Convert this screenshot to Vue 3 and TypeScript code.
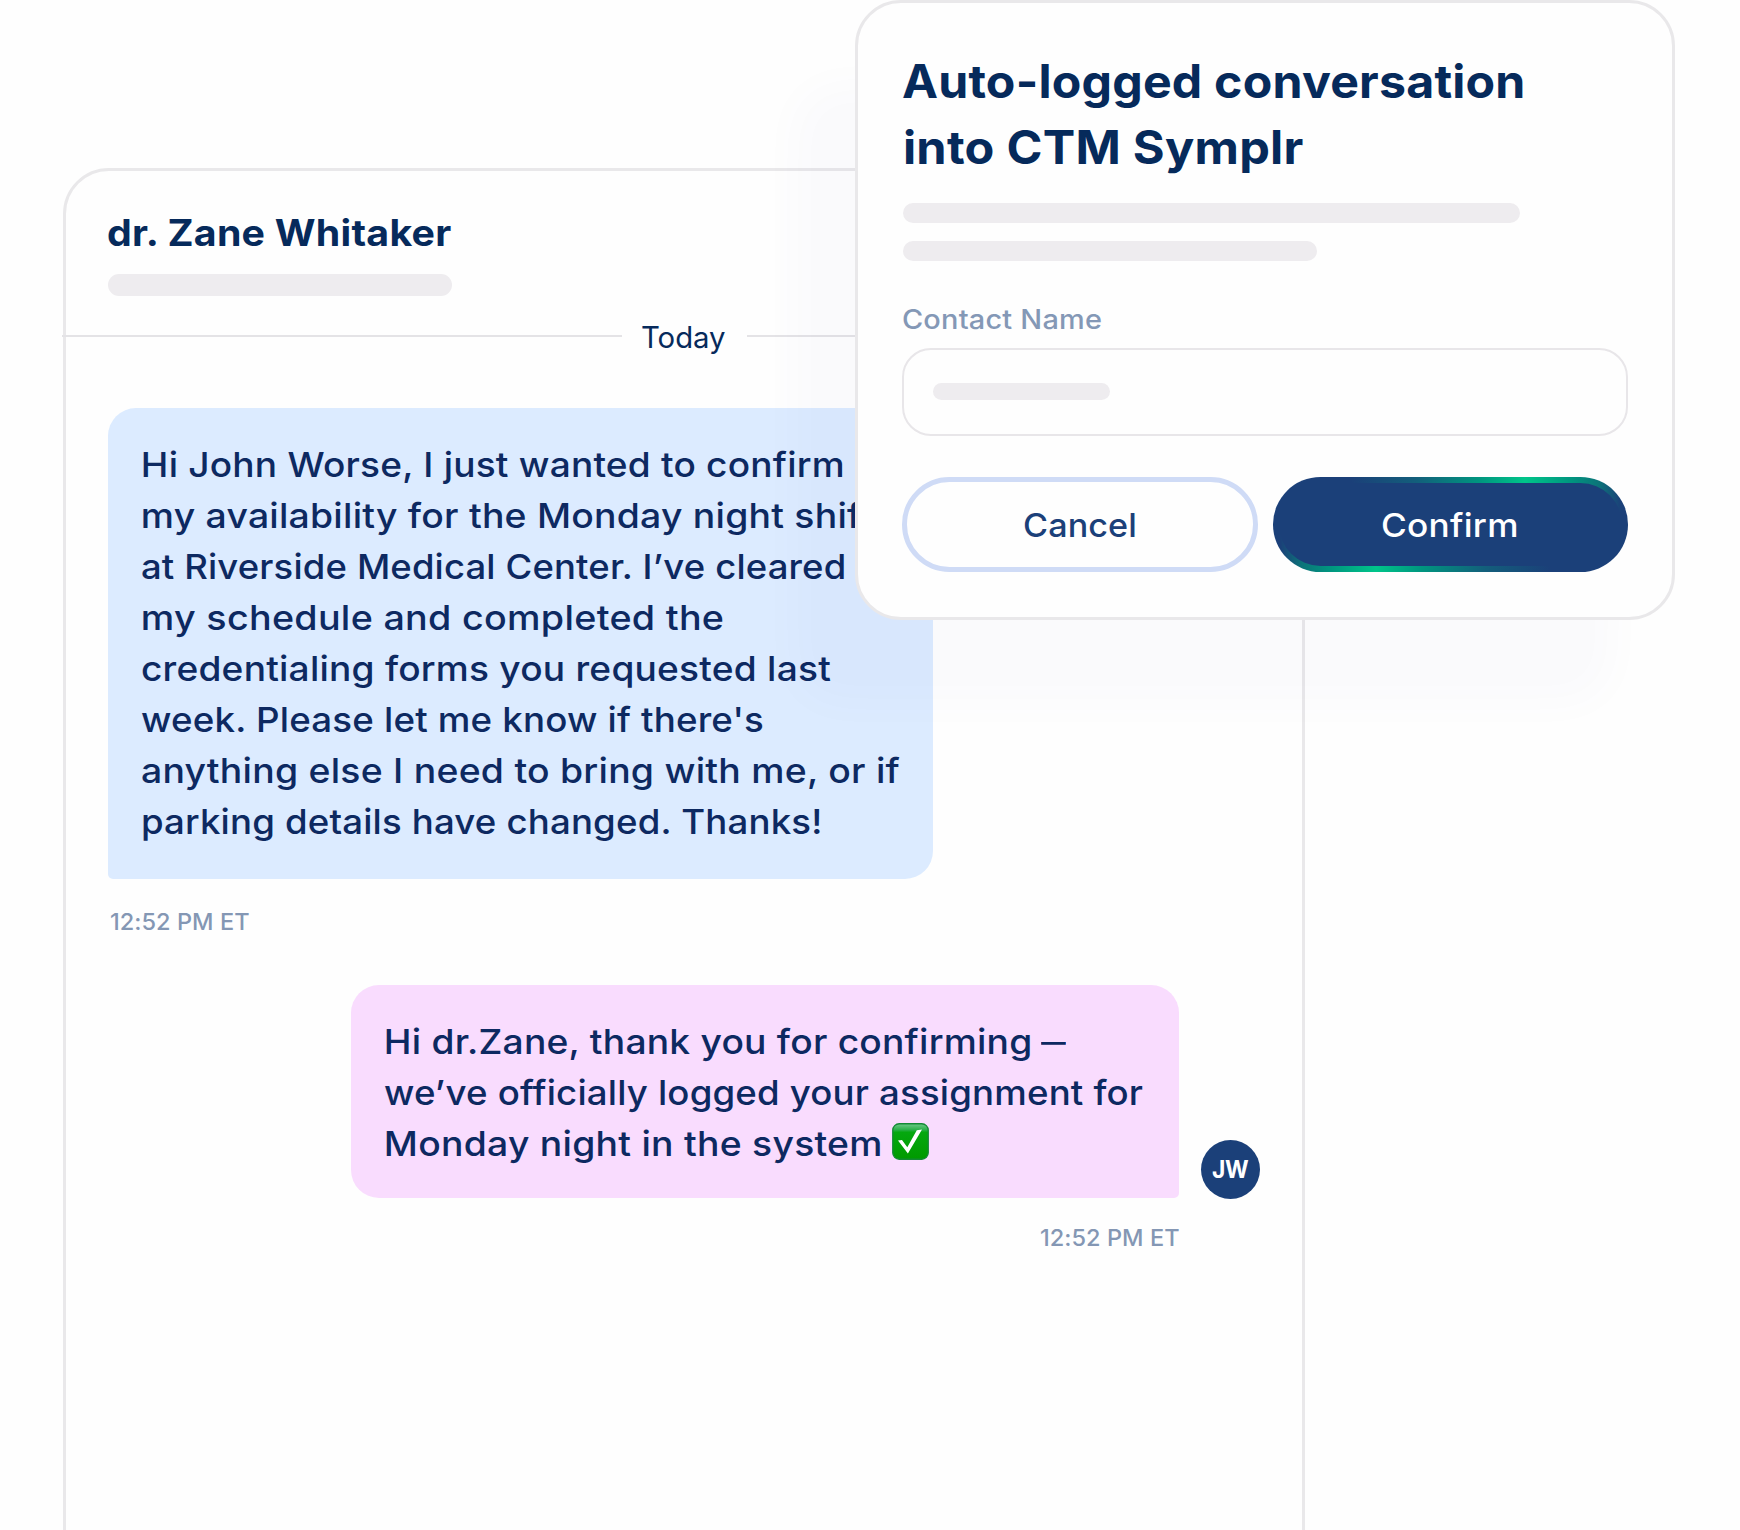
<script setup lang="ts">
interface Line {
  text: string
  indent: number
  width: number
  tail?: 'dash' | 'check'
}

const family = '"Inter", "Liberation Sans", sans-serif'
const ctx = document.createElement('canvas').getContext('2d')!

// Spreads a run of text over a given ink width: mostly by widening glyphs, the rest by tracking.
function fit(text: string, size: number, weight: number, width: number) {
  ctx.font = `${weight} ${size}px ${family}`
  const m = ctx.measureText(text)
  const ink = m.actualBoundingBoxLeft + m.actualBoundingBoxRight
  const ratio = width / ink
  const stretch = text.length === 1 ? ratio : 1 + (ratio - 1) * 0.85
  const tracking = text.length === 1 ? 0 : (width / stretch - ink) / (text.length - 1)
  return {
    width: `${width}px`,
    fontSize: `${size}px`,
    fontWeight: weight,
    letterSpacing: `${tracking.toFixed(3)}px`,
    transform: `translateX(${(m.actualBoundingBoxLeft * stretch).toFixed(2)}px) scaleX(${stretch.toFixed(4)})`,
  }
}

const incoming: Line[] = [
  { text: 'Hi John Worse, I just wanted to confirm', indent: 2, width: 700 },
  { text: 'my availability for the Monday night shift', indent: 2, width: 730 },
  { text: 'at Riverside Medical Center. I’ve cleared', indent: 1, width: 702 },
  { text: 'my schedule and completed the', indent: 2, width: 579.5 },
  { text: 'credentialing forms you requested last', indent: 1, width: 689 },
  { text: "week. Please let me know if there's", indent: 0, width: 622.5 },
  { text: 'anything else I need to bring with me, or if', indent: 1, width: 758 },
  { text: 'parking details have changed. Thanks!', indent: 2, width: 677 },
]

const outgoing: Line[] = [
  { text: 'Hi dr.Zane, thank you for confirming', indent: 1.5, width: 644, tail: 'dash' },
  { text: 'we’ve officially logged your assignment for', indent: 0, width: 758.5 },
  { text: 'Monday night in the system', indent: 1.5, width: 494.5, tail: 'check' },
]
</script>

<template>
  <main class="stage">
    <section class="chat">
      <header class="chat-head">
        <h2 class="name"><span class="fit" :style="fit('dr. Zane Whitaker', 36.7, 700, 344.5)">dr. Zane Whitaker</span></h2>
        <div class="skeleton name-skeleton"></div>
      </header>
      <div class="day">
        <i class="rule rule-left"></i>
        <span class="fit" :style="fit('Today', 29.5, 400, 83)">Today</span>
        <i class="rule rule-right"></i>
      </div>

      <div class="bubble bubble-in">
        <div v-for="line in incoming" :key="line.text" class="line" :style="{ paddingLeft: line.indent + 'px' }">
          <span class="fit" :style="fit(line.text, 34.7, 500, line.width)">{{ line.text }}</span>
        </div>
      </div>
      <div class="time time-in"><span class="fit" :style="fit('12:52 PM ET', 23, 500, 137.5)">12:52 PM ET</span></div>

      <div class="reply">
        <div class="bubble bubble-out">
          <div v-for="line in outgoing" :key="line.text" class="line" :style="{ paddingLeft: line.indent + 'px' }">
            <span class="fit" :style="fit(line.text, 34.7, 500, line.width)">{{ line.text }}</span>
            <span v-if="line.tail === 'dash'" class="fit" :style="fit('—', 34.7, 400, 25)">—</span>
            <svg v-if="line.tail === 'check'" class="check" viewBox="0 0 37 37" role="img" aria-label="Done">
              <defs>
                <linearGradient id="gloss" x1="0" y1="0" x2="0" y2="1">
                  <stop offset="0" stop-color="#6fc98a" />
                  <stop offset="0.17" stop-color="#2bb04a" />
                  <stop offset="0.24" stop-color="#05a80f" />
                  <stop offset="1" stop-color="#009a00" />
                </linearGradient>
              </defs>
              <rect x="0.75" y="0.75" width="35.5" height="35.5" rx="6.5" fill="url(#gloss)" stroke="#138a35" stroke-width="1.3" />
              <path d="M6 17.6 L10 17 L15.3 24.2 L24.8 7.2 L30 6.5 L15.9 30.5 Z" fill="#fff" />
            </svg>
          </div>
        </div>
        <div class="avatar"><span class="fit" :style="fit('JW', 23.8, 700, 37)">JW</span></div>
      </div>
      <div class="time time-out"><span class="fit" :style="fit('12:52 PM ET', 23, 500, 137.5)">12:52 PM ET</span></div>
    </section>

    <section class="dialog">
      <h1 class="title">
        <span class="fit" :style="fit('Auto-logged conversation', 46.2, 700, 619.5)">Auto-logged conversation</span>
        <span class="fit second" :style="fit('into CTM Symplr', 46.2, 700, 397.5)">into CTM Symplr</span>
      </h1>
      <div class="skeleton copy-a"></div>
      <div class="skeleton copy-b"></div>
      <div class="label"><span class="fit" :style="fit('Contact Name', 27, 500, 198)">Contact Name</span></div>
      <div class="field"><div class="skeleton value"></div></div>
      <div class="actions">
        <button class="btn cancel"><span class="fit" :style="fit('Cancel', 33, 500, 110.5)">Cancel</span></button>
        <button class="btn confirm"><span class="fit" :style="fit('Confirm', 33, 500, 134)">Confirm</span></button>
      </div>
    </section>
  </main>
</template>

<style>
body {
  background: #fefefe;
}
</style>

<style scoped>
.stage {
  position: relative;
  width: 1740px;
  height: 1530px;
  overflow: hidden;
  background: #fefefe;
  font-family: "Inter", "Liberation Sans", sans-serif;
  color: #0d2961;
}
.fit {
  display: block;
  flex: none;
  white-space: nowrap;
  transform-origin: 0 50%;
}
.skeleton {
  background: #eeecef;
  border-radius: 11px;
}
h1,
h2 {
  margin: 0;
}

.chat {
  box-sizing: border-box;
  width: 1242px;
  height: 1420px;
  margin: 168px 0 0 63px;
  border: 3px solid #e9e8ea;
  border-radius: 46px 46px 0 0;
}
.chat-head {
  height: 145px;
  box-sizing: border-box;
  padding: 37px 0 0 42px;
}
.name {
  height: 50px;
  line-height: 50px;
  color: #062a5b;
}
.name-skeleton {
  width: 344px;
  height: 22px;
  margin-top: 16px;
}
.day {
  display: flex;
  align-items: center;
  height: 40px;
  margin-left: -4px;
  color: #062a5b;
  line-height: 40px;
}
.day .fit {
  margin: 1px 22px 0 20px;
}
.rule {
  height: 2px;
  background: #e4e3e6;
}
.rule-left {
  width: 560px;
}
.rule-right {
  flex: 1;
}

.bubble {
  box-sizing: border-box;
  padding: 31px 0 0 33px;
}
.line {
  display: flex;
  height: 51px;
  line-height: 51px;
  gap: 11.5px;
}
.bubble-in {
  width: 825px;
  height: 471px;
  margin: 52px 0 0 42px;
  border-radius: 28px 28px 28px 5px;
  background: #dcebff;
}
.time {
  height: 30px;
  line-height: 30px;
  color: #8497b4;
}
.time-in {
  margin: 28px 0 0 45px;
}
.reply {
  display: flex;
  align-items: flex-end;
  gap: 22px;
  margin: 48px 0 0 285px;
}
.bubble-out {
  width: 828px;
  height: 213px;
  border-radius: 28px 28px 5px 28px;
  background: #f9dcfe;
}
.check {
  flex: none;
  width: 37px;
  height: 37px;
  margin-top: 4.5px;
}
.avatar {
  display: flex;
  align-items: center;
  justify-content: center;
  width: 59px;
  height: 59px;
  margin-bottom: -1px;
  border-radius: 50%;
  background: #1b4079;
  color: #fff;
}
.time-out {
  margin: 25px 0 0 975px;
}

.dialog {
  position: absolute;
  left: 855px;
  top: 0;
  box-sizing: border-box;
  width: 820px;
  height: 619.5px;
  padding: 45px 44px 0;
  border: 3px solid #e9e8ea;
  border-radius: 46px;
  background: #fefefe;
  box-shadow: -62px 84px 44px rgba(70, 60, 170, 0.02);
}
.title {
  padding-left: 1px;
  line-height: 66px;
  color: #062a5b;
}
.second {
  margin-left: 2px;
}
.copy-a {
  width: 617px;
  height: 20px;
  margin: 23px 0 0 1px;
}
.copy-b {
  width: 413.5px;
  height: 20.5px;
  margin: 17.5px 0 0 1px;
}
.label {
  height: 40px;
  margin: 38.5px 0 0 1px;
  line-height: 40px;
  color: #8498b6;
}
.field {
  box-sizing: border-box;
  display: flex;
  align-items: center;
  width: 725.5px;
  height: 88px;
  margin-top: 8.5px;
  padding: 0 0 2px 29px;
  border: 2px solid #e8e6e9;
  border-radius: 29px;
}
.value {
  width: 176.5px;
  height: 17px;
  border-radius: 9px;
}
.actions {
  display: flex;
  gap: 15px;
  margin-top: 41px;
}
.btn {
  box-sizing: border-box;
  display: flex;
  align-items: center;
  justify-content: center;
  width: 355.5px;
  height: 95px;
  padding: 0 2px 0 0;
  border-radius: 48px;
  font-family: inherit;
  text-align: left;
}
.cancel {
  border: 5px solid #cfdbf6;
  background: #fefefe;
  color: #1b4079;
}
.confirm {
  border: 6px solid transparent;
  background:
    linear-gradient(#1b4079, #1b4079) padding-box,
    linear-gradient(90deg, #1b4079 22%, #135e7b 40%, #00957f 58%, #00c58a 71%, #00957f 84%, #0c7379 92%, #1b4079 98%) 0 0 / 100% 40% no-repeat border-box,
    linear-gradient(270deg, #1b4079 22%, #135e7b 40%, #00957f 58%, #00c58a 71%, #00957f 84%, #0c7379 92%, #1b4079 98%) 0 100% / 100% 40% no-repeat border-box,
    linear-gradient(#1b4079, #1b4079) border-box;
  color: #fff;
}
</style>
